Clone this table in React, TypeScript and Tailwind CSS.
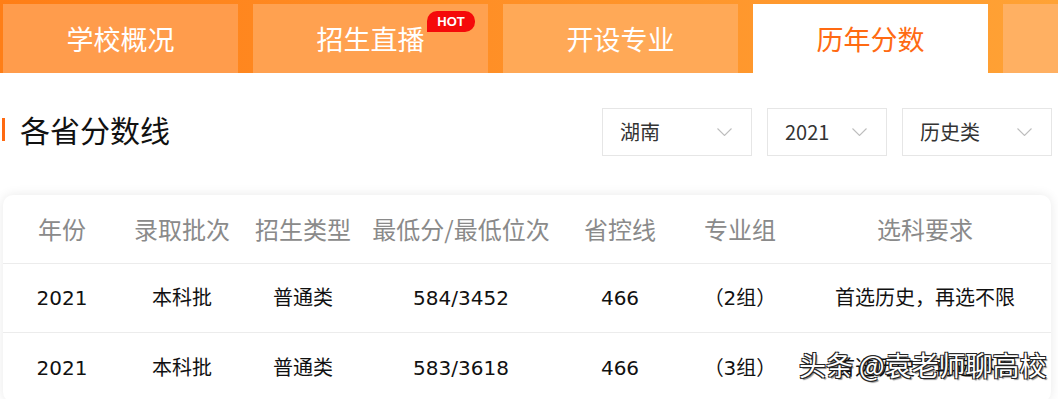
import React from 'react';

const tabs = [
  { label: '学校概况', bg: 'bg-[#ff9c4c]' },
  { label: '招生直播', bg: 'bg-[#ffa150]', hot: true },
  { label: '开设专业', bg: 'bg-[#ffa957]' },
  { label: '历年分数', bg: 'bg-white', active: true },
  { label: '', bg: 'bg-[#ffb062]' },
];

const cols = ['w-[118px]', 'w-[122px]', 'w-[120px]', 'w-[196px]', 'w-[122px]', 'w-[118px]', 'w-[252px]'];
const headers = ['年份', '录取批次', '招生类型', '最低分/最低位次', '省控线', '专业组', '选科要求'];
const rows = [
  ['2021', '本科批', '普通类', '584/3452', '466', '（2组）', '首选历史，再选不限'],
  ['2021', '本科批', '普通类', '583/3618', '466', '（3组）', '首选历史，再选不限'],
];

function Chevron() {
  return (
    <svg width="15" height="8" viewBox="0 0 15 8" fill="none" className="shrink-0">
      <path d="M0.5 0.5 L7.5 7.5 L14.5 0.5" stroke="#bdbdbd" strokeWidth="1.1" />
    </svg>
  );
}

function Select({ value, w }: { value: string; w: string }) {
  return (
    <div className={`${w} h-[48px] border border-[#e6e6e6] flex items-center justify-between pl-[17px] pr-[19px] text-[20px] text-[#333]`}>
      <span>{value}</span>
      <Chevron />
    </div>
  );
}

export default function App() {
  return (
    <div
      className="w-[1058px] h-[399px] bg-white overflow-hidden relative"
      style={{ fontFamily: '"Noto Sans CJK SC", "Noto Sans", sans-serif' }}
    >
      {/* tab bar */}
      <div className="h-[73px] pt-[4px] pl-[3px] flex gap-[15px] bg-gradient-to-r from-[#ff7e16] to-[#ffa235]">
        {tabs.map((t, i) => (
          <div
            key={i}
            className={`${t.bg} ${i === 4 ? 'flex-1' : 'w-[235px]'} h-full flex items-center justify-center relative`}
          >
            <span className={`text-[27px] leading-none ${t.active ? 'text-[#ff6a12]' : 'text-white'}`}>{t.label}</span>
            {t.hot && (
              <span
                className="absolute left-[174px] top-[7px] w-[48px] h-[21px] bg-[#f50a0a] text-white text-[13px] font-bold leading-[21px] text-center rounded-[10px] rounded-bl-none"
                style={{ fontFamily: '"Liberation Sans", Arial, sans-serif' }}
              >
                HOT
              </span>
            )}
          </div>
        ))}
      </div>

      {/* title + filters */}
      <div className="flex justify-between items-start mt-[35px] pl-[2px] pr-[6px]">
        <div className="flex items-center mt-[6px]">
          <div className="w-[3px] h-[23px] bg-[#ff6a12]" />
          <span className="ml-[15px] text-[30px] leading-none text-[#111]">各省分数线</span>
        </div>
        <div className="flex gap-[15px]">
          <Select value="湖南" w="w-[150px]" />
          <Select value="2021" w="w-[120px]" />
          <Select value="历史类" w="w-[150px]" />
        </div>
      </div>

      {/* table card */}
      <div className="mt-[39px] ml-[3px] w-[1048px] bg-white rounded-[10px] shadow-[0_0_12px_rgba(0,0,0,0.09)]">
        <div className="flex h-[69px] items-center border-b border-[#ececec]">
          {headers.map((h, i) => (
            <div key={i} className={`${cols[i]} text-center text-[24px] text-[#8a8a8a]`}>
              {h}
            </div>
          ))}
        </div>
        {rows.map((r, ri) => (
          <div key={ri} className={`flex h-[69px] items-center ${ri === 0 ? 'border-b border-[#ececec]' : ''}`}>
            {r.map((c, ci) => (
              <div
                key={ci}
                className={`${cols[ci]} text-center text-[20px] text-[#111]`}
                style={{ fontFamily: '"DejaVu Sans", "Noto Sans CJK SC", sans-serif' }}
              >
                {c}
              </div>
            ))}
          </div>
        ))}
      </div>

      {/* watermark */}
      <div
        className="absolute left-[799px] top-[351px] text-[27px] leading-none text-white whitespace-nowrap"
        style={{
          textShadow:
            '1px 1px 0 #222, -1px -1px 0 #222, 1px -1px 0 #222, -1px 1px 0 #222, 2px 2px 1px rgba(0,0,0,0.45)',
        }}
      >
        头条 @袁老师聊高校
      </div>
    </div>
  );
}
